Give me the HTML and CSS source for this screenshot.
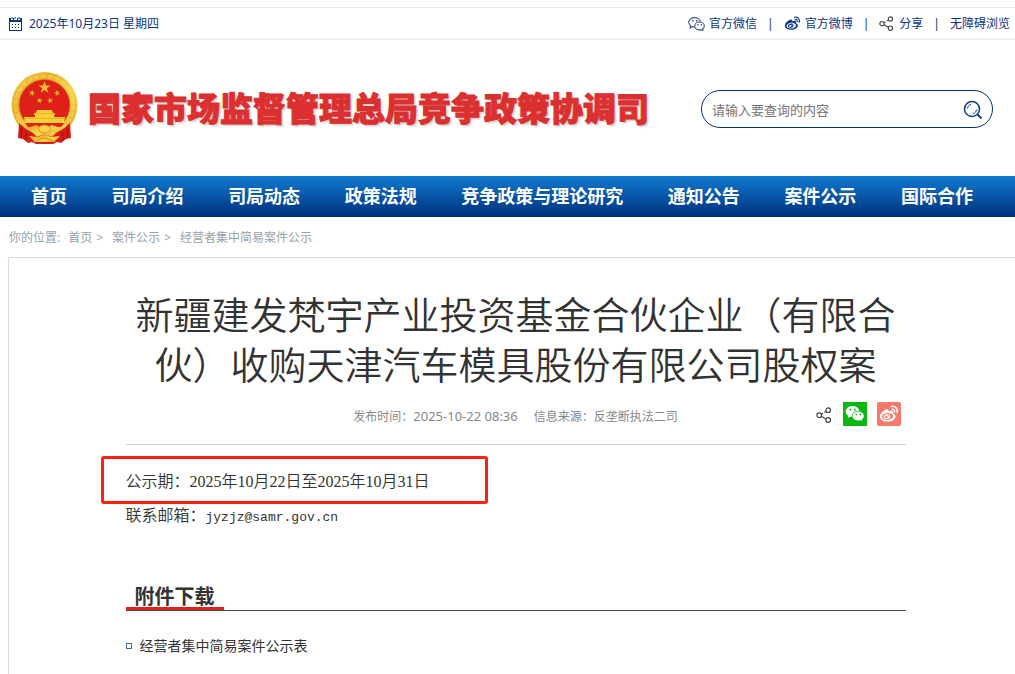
FILE: index.html
```html
<!DOCTYPE html>
<html lang="zh-CN">
<head>
<meta charset="UTF-8">
<meta name="viewport" content="width=device-width, initial-scale=1.0">
<title>国家市场监督管理总局竞争政策协调司</title>
<link rel="stylesheet" href="styles.css">
</head>
<body>

<!-- shared icons -->
<svg class="sprite" aria-hidden="true">
    <symbol id="i-share" viewBox="0 0 16 16">
        <g fill="none" stroke="#444" stroke-width="1.2">
            <circle cx="3.2" cy="8.2" r="2.3"/>
            <circle cx="12.2" cy="3.2" r="2.3"/>
            <circle cx="12.2" cy="13" r="2.3"/>
            <path d="M5.3 7.2L7 6.2M8.4 5.4L10.1 4.4M5.3 9.3L10.1 12"/>
        </g>
    </symbol>
    <symbol id="i-weibo" viewBox="0 0 20 18">
        <path fill="currentColor" fill-rule="evenodd" d="M8 4.2C5 4.6.8 8.4.8 11.6c0 3 3.6 5 7.7 5 5 0 8-2.700 8-5.200 0-1.600-1.300-2.300-2.300-2.600.5-1.500.3-2.500-.6-2.900-1.100-.5-2.600-.1-4 .4.3-1.400-.2-2.300-1.600-2.100zM8.300 8.100c3.200-.3 5.700 1 5.800 3 .1 1.900-2.300 3.700-5.400 4-3.200.3-5.700-1-5.800-3-.1-1.900 2.300-3.700 5.400-4z"/>
        <path fill="currentColor" fill-rule="evenodd" d="M8.200 8.900c-2.300.2-4 1.700-3.700 3.400.3 1.600 2.200 2.300 4 1.900 2-.4 3.200-2 2.800-3.500-.3-1.200-1.600-1.900-3.100-1.800zm-1.100 2c.8-.2 1.500.2 1.500.9s-.6 1.300-1.300 1.400c-.8.1-1.400-.3-1.400-.9 0-.6.5-1.200 1.200-1.400zM9.400 10.100a.6.6 0 1 1 0 1.200.6.6 0 0 1 0-1.200z"/>
        <path fill="none" stroke="currentColor" stroke-width="1.500" stroke-linecap="round" d="M12.500 1.500c3.700-.8 6.700 2.200 5.600 6M13.100 4.200c1.700-.3 2.900.9 2.500 2.500"/>
    </symbol>
</svg>

<div class="topbar">
    <div class="date">
        <svg width="13" height="14" viewBox="0 0 13 14">
            <path d="M0 1h2v2h2V1h1v2h3V1h1v2h2V1h2v13H0zM1 5v8h11V5z" fill="#0b3486" fill-rule="evenodd"/>
            <path d="M3 0v2M6 0v2M10 0v2" stroke="#0b3486"/>
            <path d="M3 7.500h8M3 10.500h8" stroke="#0b3486" stroke-dasharray="1 2"/>
        </svg>
        <span>2025年10月23日 星期四</span>
    </div>
    <div class="links">
        <a href="#">
            <svg width="17" height="14" viewBox="0 0 17 14" fill="#fff" stroke="#3c5f92" stroke-width="1.200">
                <path d="M6.500.7C3.300.7.7 2.700.7 5.300c0 1.500.8 2.700 2 3.500l-.5 2 2.100-1.100c.7.2 1.500.3 2.200.3 3.300 0 5.800-2.100 5.800-4.700S9.800.7 6.500.7z"/>
                <path d="M11.500 5c-2.700 0-4.800 1.700-4.800 3.900s2.100 3.900 4.800 3.900c.6 0 1.200-.1 1.700-.2l1.800.9-.4-1.600c1.100-.7 1.700-1.800 1.700-3C16.300 6.700 14.200 5 11.500 5z"/>
                <path fill="#3c5f92" stroke="none" d="M4 3h1.600v1.600H4zM8 3h1.600v1.600H8zM9.300 7h1.400v1.400H9.300zM12.600 7H14v1.400h-1.400z"/>
            </svg>
            官方微信</a>
        <i>|</i>
        <a href="#"><svg class="weibo" width="17" height="15"><use href="#i-weibo"/></svg>官方微博</a>
        <i>|</i>
        <a href="#" class="share"><svg width="15" height="15"><use href="#i-share"/></svg>分享</a>
        <i>|</i>
        <a href="#">无障碍浏览</a>
    </div>
</div>

<header class="header">
    <div class="logo">
        <svg class="emblem" viewBox="0 0 67 72" role="img" aria-label="国徽">
            <defs>
                <linearGradient id="gold" x1="0" y1="0" x2="1" y2="1">
                    <stop offset="0" stop-color="#f7cf45"/>
                    <stop offset=".3" stop-color="#e6b028"/>
                    <stop offset=".6" stop-color="#f8d54c"/>
                    <stop offset="1" stop-color="#dfa01b"/>
                </linearGradient>
                <path id="star" d="M0-1L.225-.309H.951L.363.118.588.809 0 .382-.588.809-.363.118-.951-.309H-.225z"/>
            </defs>
            <path d="M9 49L8 66l4-1 5 5 4-2 4 2h17l4-2 4 2 5-5 4 1-1-17z" fill="#cf1717"/>
            <circle cx="33.500" cy="33" r="33" fill="url(#gold)"/>
            <circle cx="33.500" cy="33" r="29" fill="none" stroke="#f9de68" stroke-width="3" stroke-dasharray="5 2" opacity=".4"/>
            <circle cx="33.500" cy="33" r="25.500" fill="#df2018" stroke="#c58b18" stroke-width=".6"/>
            <g fill="#f4bd2e">
                <use href="#star" transform="translate(33.500 15.500) scale(6.500)"/>
                <use href="#star" transform="translate(21 21) rotate(15) scale(3.200)"/>
                <use href="#star" transform="translate(46 21) rotate(-15) scale(3.200)"/>
                <use href="#star" transform="translate(28.500 28.500) rotate(10) scale(3.200)"/>
                <use href="#star" transform="translate(39 28.500) rotate(-10) scale(3.200)"/>
            </g>
            <path d="M26 38h15l1 3h2v2h-21v-2h2zM24 43h19v2h11l-1 6H14l-1-6h11z" fill="#f9cf3c"/>
            <path d="M24 41.500h20M14 46.500h39" stroke="#e0a51d" stroke-width=".7"/>
            <path d="M14 51h39l-5 7H19z" fill="#df2018"/>
            <path d="M8 51l6 5 8 5 4 4 7.500-3 7.500 3 4-4 8-5 6-5 1 15-5 1-5 4-4-1-4 2H25l-4-2-4 1-5-4-5-1z" fill="#d81b17"/>
            <path d="M11 56l-1 9M16 60l-2 8M56 56l1 9M51 60l2 8" stroke="#960f10"/>
            <path d="M9 51c4 5 9 9 17 9l2-1 5.500 3 5.500-3 2 1c8 0 13-4 17-9-5 4-10 5-14 3l-4-1-2 2-5-2-5 2-2-2-4 1c-4 2-9 1-13-3z" fill="url(#gold)"/>
            <ellipse cx="33.500" cy="57" rx="6" ry="4" fill="#f7d149" stroke="#cb8b17" stroke-width=".8"/>
            <path d="M18 64l9 1 6.500-3 6.500 3 9-1-6 6H24z" fill="url(#gold)"/>
            <path d="M25 70c5-5 12-5 17 0" fill="none" stroke="#d18e18"/>
        </svg>
        <span class="site-name">国家市场监督管理总局竞争政策协调司</span>
    </div>
    <form class="search">
        <input type="text" placeholder="请输入要查询的内容" aria-label="请输入要查询的内容">
        <button type="submit" aria-label="搜索">
            <svg width="20" height="20" viewBox="0 0 20 20" fill="none" stroke="#12408f">
                <circle cx="9" cy="9" r="7.500" stroke-width="1.600"/>
                <path d="M14.500 14.500l4 4" stroke-width="2"/>
                <path d="M4.500 8.500c.2-2.200 1.400-3.600 3.500-4M13.500 9.500c-.2 2.200-1.400 3.600-3.500 4" stroke-width="1"/>
            </svg>
        </button>
    </form>
</header>

<nav class="nav">
    <a href="#">首页</a>
    <a href="#">司局介绍</a>
    <a href="#">司局动态</a>
    <a href="#">政策法规</a>
    <a href="#">竞争政策与理论研究</a>
    <a href="#">通知公告</a>
    <a href="#">案件公示</a>
    <a href="#">国际合作</a>
</nav>

<div class="crumbs">
    <span>你的位置:</span>
    <a href="#">首页</a><b>&gt;</b>
    <a href="#">案件公示</a><b>&gt;</b>
    <a href="#">经营者集中简易案件公示</a>
</div>

<main class="article">
    <div class="inner">
        <h1>新疆建发梵宇产业投资基金合伙企业（有限合伙）收购天津汽车模具股份有限公司股权案</h1>
        <div class="meta">
            <span>发布时间：<time>2025-10-22 08:36</time></span>
            <span>信息来源：反垄断执法二司</span>
            <div class="share-btns">
                <button type="button" class="more" aria-label="分享"><svg width="16" height="16"><use href="#i-share"/></svg></button>
                <button type="button" class="wechat" aria-label="微信">
                    <svg width="20" height="18" viewBox="0 0 20 18">
                        <path fill="#fff" d="M7.500 1C3.700 1 .7 3.400.7 6.500c0 1.800 1 3.300 2.500 4.300l-.6 2.200 2.500-1.300c.8.2 1.600.3 2.400.3 3.800 0 6.800-2.400 6.800-5.500S11.300 1 7.500 1z"/>
                        <path fill="#fff" stroke="#08b80d" stroke-width=".8" d="M13.200 6.300c-3.300 0-6 2.100-6 4.800 0 2.600 2.700 4.800 6 4.800.7 0 1.400-.1 2-.3l2.200 1.200-.5-2c1.400-.9 2.300-2.200 2.300-3.700 0-2.700-2.700-4.800-6-4.800z"/>
                        <path fill="#08b80d" d="M4.500 3.800h1.700v1.700H4.500zM9 3.800h1.700v1.700H9zM10.500 8.700H12v1.500h-1.500zM14.500 8.700H16v1.500h-1.500z"/>
                    </svg>
                </button>
                <button type="button" class="sina" aria-label="微博"><svg width="20" height="18"><use href="#i-weibo"/></svg></button>
            </div>
        </div>
        <div class="text">
            <p class="period">公示期：2025年10月22日至2025年10月31日</p>
            <p>联系邮箱：<span class="mail">jyzjz@samr.gov.cn</span></p>
        </div>
        <section class="files">
            <h2><span>附件下载</span></h2>
            <ul>
                <li><a href="#">经营者集中简易案件公示表</a></li>
            </ul>
        </section>
    </div>
</main>

</body>
</html>
```

FILE: styles.css
```css
* {
    box-sizing: border-box;
}

body {
    margin: 0;
    background: #fff;
    color: #333;
    font-family: "Noto Sans", "Noto Sans CJK SC", sans-serif;
    font-size: 12px;
    overflow-x: hidden;
}

a {
    color: inherit;
    text-decoration: none;
}

button {
    border: none;
    background: none;
    padding: 0;
    cursor: pointer;
}

svg {
    display: block;
    flex: none;
}

.sprite {
    position: absolute;
    width: 0;
    height: 0;
}

/* top bar */
.topbar {
    display: flex;
    justify-content: space-between;
    margin-top: 7px;
    padding: 1px 5px 0 9px;
    border-top: 1px solid #e6e6e6;
    border-bottom: 2px solid #eee;
    line-height: 29px;
    color: #0b3486;
}

.date,
.links,
.links a {
    display: flex;
    align-items: center;
}

.date {
    gap: 7px;
}

.links {
    gap: 10px;
}

.links a {
    gap: 4px;
}

.links .share {
    gap: 5px;
}

.links i {
    font-style: normal;
}

.weibo {
    color: #12408f;
}

/* header */
.header {
    display: flex;
    justify-content: space-between;
    align-items: center;
    height: 136px;
    padding: 0 22px 0 11px;
}

.logo {
    display: flex;
    align-items: center;
    gap: 10px;
}

.emblem {
    width: 67px;
    height: 72px;
}

.site-name {
    padding-top: 2px;
    font-size: 33px;
    font-weight: 900;
    line-height: 48px;
    color: #dc3030;
    white-space: nowrap;
    -webkit-text-stroke: 1px #dc3030;
    text-shadow: 2px 2px 2px rgba(0, 0, 0, 0.2);
}

.search {
    display: flex;
    align-items: center;
    width: 292px;
    height: 38px;
    margin-top: 2px;
    padding: 2px 9px 0 10px;
    border: 1px solid #00307f;
    border-radius: 19px;
}

.search input {
    flex: 1;
    min-width: 0;
    padding: 0;
    border: none;
    outline: none;
    background: none;
    font-family: inherit;
    font-size: 13px;
}

.search input::placeholder {
    color: #757575;
}

/* navigation */
.nav {
    display: flex;
    justify-content: space-between;
    padding: 0 42px 0 31px;
    background: linear-gradient(#107bd0, #002f7c);
    color: #fff;
    font-size: 18px;
    font-weight: bold;
    line-height: 41px;
}

.crumbs {
    display: flex;
    padding: 2px 9px 0;
    line-height: 38px;
    color: #999fa8;
}

.crumbs span {
    margin-right: 8px;
}

.crumbs b {
    margin: 0 9px 0 4px;
    font-weight: normal;
}

/* article */
.article {
    margin: 0 -8px 0 8px;
    min-height: 417px;
    border: 1px solid #d0dae8;
    border-bottom: none;
}

.inner {
    max-width: 780px;
    margin: 0 auto;
}

h1 {
    margin: 0;
    padding-top: 31px;
    font-size: 38px;
    font-weight: 350;
    line-height: 50px;
    text-align: center;
}

.meta {
    position: relative;
    display: flex;
    justify-content: center;
    gap: 16px;
    border-bottom: 1px solid #ccc;
    line-height: 55px;
    color: #888;
}

.meta time {
    font-size: 13px;
}

.share-btns {
    position: absolute;
    right: 5px;
    top: 13px;
    display: flex;
    gap: 10px;
}

.share-btns button {
    display: flex;
    align-items: center;
    justify-content: center;
    width: 24px;
    height: 24px;
}

.share-btns .more {
    width: 18px;
    padding-top: 2px;
}

.share-btns .wechat {
    background: #08b80d;
}

.share-btns .sina {
    background: #f77b6d;
    color: #fff;
    border-radius: 2px;
}

.text {
    padding-top: 20px;
    font-family: "Liberation Serif", "Noto Sans CJK SC", serif;
    font-size: 16px;
    font-weight: 350;
    line-height: 34px;
}

.text p {
    position: relative;
    margin: 0;
}

.mail {
    font-family: "Liberation Mono", monospace;
    font-size: 13px;
}

/* red frame round the notice period */
.period::after {
    content: "";
    position: absolute;
    left: -25px;
    top: -9px;
    width: 387px;
    height: 48px;
    box-sizing: border-box;
    border: 3px solid #ff2012;
    border-radius: 3px;
}

.files {
    margin-top: 48px;
}

.files h2 {
    display: flex;
    margin: 0;
    padding-top: 4px;
    border-bottom: 1px solid #444;
    font-size: 20px;
    line-height: 20px;
}

.files h2 span {
    padding: 0 9px;
    border-bottom: 3px solid #dd2018;
}

.files ul {
    margin: 20px 0 0;
    padding: 0;
    list-style: none;
    font-size: 14px;
    line-height: 30px;
}

.files li {
    display: flex;
    align-items: center;
    gap: 8px;
}

.files li::before {
    content: "";
    box-sizing: border-box;
    width: 6px;
    height: 6px;
    border: 1px solid #4a63a8;
}
```
